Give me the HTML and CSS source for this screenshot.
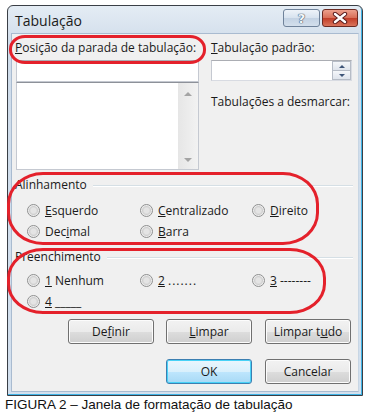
FILE: index.html
```html
<!DOCTYPE html>
<html lang="pt">
<head>
    <meta charset="UTF-8">
    <title>Tabulação</title>
    <link rel="stylesheet" href="styles.css">
</head>
<body>
    <div class="window">
        <div class="titlebar">
            <span class="title">Tabulação</span>
            <div class="caption-btns">
                <span class="cbtn help">?</span>
                <span class="cbtn close">
                    <svg width="16" height="12" viewBox="0 0 16 12">
                        <path d="M3 2 L13 10 M13 2 L3 10" stroke="#5a1d1d" stroke-width="4.4" stroke-linecap="round"/>
                        <path d="M3 2 L13 10 M13 2 L3 10" stroke="#fff" stroke-width="2.4" stroke-linecap="round"/>
                    </svg>
                </span>
            </div>
        </div>

        <div class="client">
            <div class="top">
                <div class="col-left">
                    <div class="lbl"><u>P</u>osição da parada de tabulação:</div>
                    <div class="edit"></div>
                    <div class="listbox">
                        <div class="list-area"></div>
                        <div class="vscroll">
                            <span class="arrow-up"></span>
                            <span class="arrow-down"></span>
                        </div>
                    </div>
                </div>
                <div class="col-right">
                    <div class="lbl"><u>T</u>abulação padrão:</div>
                    <div class="spin">
                        <div class="spin-field"></div>
                        <div class="spin-btns">
                            <span class="sb"><span class="tri-up"></span></span>
                            <span class="sb"><span class="tri-down"></span></span>
                        </div>
                    </div>
                    <div class="lbl desm">Tabulações a desmarcar:</div>
                </div>
            </div>

            <div class="group group-align">
                <div class="group-head"><span>Alinhamento</span><span class="rule"></span></div>
                <div class="radios">
                    <div class="opt"><span class="radio"></span><span><u>E</u>squerdo</span></div>
                    <div class="opt"><span class="radio"></span><span><u>C</u>entralizado</span></div>
                    <div class="opt"><span class="radio"></span><span><u>D</u>ireito</span></div>
                    <div class="opt"><span class="radio"></span><span>Dec<u>i</u>mal</span></div>
                    <div class="opt"><span class="radio"></span><span><u>B</u>arra</span></div>
                </div>
            </div>

            <div class="group group-fill">
                <div class="group-head"><span>Preenchimento</span><span class="rule"></span></div>
                <div class="radios">
                    <div class="opt"><span class="radio"></span><span><u>1</u> Nenhum</span></div>
                    <div class="opt"><span class="radio"></span><span><u>2</u> <span class="leader">.......</span></span></div>
                    <div class="opt"><span class="radio"></span><span><u>3</u> --------</span></div>
                    <div class="opt"><span class="radio"></span><span><u>4</u> _____</span></div>
                </div>
            </div>

            <div class="btn-row first">
                <span class="btn">De<u>f</u>inir</span>
                <span class="btn"><u>L</u>impar</span>
                <span class="btn">Limpar t<u>u</u>do</span>
            </div>
            <div class="btn-row">
                <span class="btn default">OK</span>
                <span class="btn">Cancelar</span>
            </div>
        </div>
    </div>

    <div class="caption">FIGURA 2 – Janela de formatação de tabulação</div>

    <!-- marcações em vermelho sobre a janela -->
    <div class="mark mark-pos"></div>
    <div class="mark mark-align"></div>
    <div class="mark mark-fill"></div>
</body>
</html>
```

FILE: styles.css
```css
body {
    margin: 0;
    padding: 0;
    background-color: #fff;
    font-family: 'Open Sans', 'Noto Sans', sans-serif;
    font-size: 12px;
    color: #1a1a1a;
    position: relative;
    width: 366px;
    height: 415px;
    overflow: hidden;
}

.window {
    margin: 5px 0 0 7px;
    width: 356px;
    box-sizing: border-box;
    border: 1px solid #3a3f46;
    border-radius: 6px 6px 0 0;
    background: linear-gradient(#e4ecf4, #cfdcea 40px, #d3e0ee);
    padding: 0 3px 3px 3px;
    box-shadow: inset -1px -1px 0 #3fb3e6;
}

.titlebar {
    height: 27px;
    display: flex;
    align-items: center;
    justify-content: space-between;
    padding-left: 4px;
}

.title {
    font-size: 14px;
    color: #1b1b1b;
    margin-top: 1px;
}

.caption-btns {
    display: flex;
    gap: 2px;
    margin-top: -3px;
    margin-right: 1px;
}

.cbtn {
    height: 18px;
    box-sizing: border-box;
    border: 1px solid #6f829a;
    border-radius: 3px;
    display: flex;
    align-items: center;
    justify-content: center;
}

.help {
    width: 37px;
    background: linear-gradient(#eef3f9, #d8e3ef 48%, #c3d2e3 52%, #d3dfec);
    color: #f4f7fa;
    font-family: 'DejaVu Sans', sans-serif;
    font-weight: bold;
    font-size: 13px;
    text-shadow: 0 0 1px #44566d, 0 0 1px #44566d, 0 0 1px #44566d;
}

.close {
    width: 36px;
    border-color: #6b2a22;
    background: linear-gradient(#eda08c, #d96f58 48%, #c23e28 52%, #d9745c);
}

.client {
    background-color: #f0f0f0;
    border: 1px solid #a9bbd0;
    border-right-color: #c8d6e4;
    padding: 6px 5px 7px 3px;
}

.top {
    display: flex;
    gap: 12px;
    height: 130px;
}

.col-left {
    width: 184px;
}

.col-right {
    width: 141px;
}

.lbl {
    height: 16px;
    line-height: 16px;
    white-space: nowrap;
}

.edit {
    margin: 4px 0 0 1px;
    height: 22px;
    box-sizing: border-box;
    background: #fff;
    border: 1px solid #c5c9d1;
    border-top-color: #abadb3;
}

.listbox {
    margin-left: 1px;
    height: 88px;
    box-sizing: border-box;
    border: 1px solid #c5c9d1;
    border-top-color: #8d9199;
    background: #fff;
    display: flex;
}

.list-area {
    flex: 1;
}

.vscroll {
    width: 20px;
    background: linear-gradient(90deg, #e6e6e6, #f2f2f2);
    display: flex;
    flex-direction: column;
    justify-content: space-between;
    align-items: center;
    padding: 9px 0 7px;
}

.arrow-up,
.arrow-down {
    width: 0;
    height: 0;
    border-left: 4px solid transparent;
    border-right: 4px solid transparent;
}

.arrow-up {
    border-bottom: 4px solid #a4a4a4;
}

.arrow-down {
    border-top: 4px solid #a4a4a4;
}

.spin {
    margin-top: 4px;
    height: 21px;
    box-sizing: border-box;
    border: 1px solid #abadb3;
    border-color: #abadb3 #d8dbe2 #d8dbe2 #c5c9d1;
    background: #fff;
    display: flex;
}

.spin-field {
    flex: 1;
}

.spin-btns {
    width: 19px;
    display: flex;
    flex-direction: column;
}

.sb {
    flex: 1;
    border: 1px solid #b6bcc6;
    background: linear-gradient(#f5f7fa, #dfe4ec);
    display: flex;
    align-items: center;
    justify-content: center;
}

.sb + .sb {
    border-top: none;
}

.tri-up,
.tri-down {
    width: 0;
    height: 0;
    border-left: 3px solid transparent;
    border-right: 3px solid transparent;
}

.tri-up {
    border-bottom: 3px solid #3e5578;
}

.tri-down {
    border-top: 3px solid #3e5578;
}

.desm {
    margin-top: 13px;
}

.group-head {
    height: 16px;
    line-height: 16px;
    display: flex;
    align-items: center;
    gap: 6px;
}

.rule {
    flex: 1;
    height: 1px;
    background: #d5dfe5;
    box-shadow: 0 1px 0 #fff;
    margin-top: 1px;
}

.group-align {
    margin-top: 7px;
}

.group-fill {
    margin-top: 10px;
}

.radios {
    display: grid;
    grid-template-columns: 113px 112px 1fr;
    row-gap: 5px;
    padding-left: 12px;
}

.group-align .radios {
    margin-top: 9px;
}

.group-fill .radios {
    margin-top: 7px;
}

.opt {
    height: 16px;
    display: flex;
    align-items: center;
    gap: 5px;
    white-space: nowrap;
}

.leader {
    letter-spacing: 1px;
}

.radio {
    width: 13px;
    height: 13px;
    box-sizing: border-box;
    border-radius: 50%;
    border: 1px solid #8e8f8f;
    background: radial-gradient(circle, #e4e4e4 0 2.5px, #cfcfcf 4px, #ebebeb 5px, #fafafa 6px);
}

.btn-row {
    display: flex;
    justify-content: flex-end;
    gap: 13px;
    padding-right: 2px;
    margin-top: 15px;
}

.btn-row.first {
    margin-top: 10px;
}

.btn-row.first .btn:first-child {
    margin-right: -1px;
}

.btn {
    width: 86px;
    height: 25px;
    box-sizing: border-box;
    border: 1px solid #707070;
    border-radius: 3px;
    background: linear-gradient(#f2f2f2, #ebebeb 50%, #dddddd 51%, #cfcfcf);
    box-shadow: inset 0 0 0 1px #fcfcfc;
    display: flex;
    align-items: center;
    justify-content: center;
}

.btn.default {
    border-color: #3c7fb1;
    box-shadow: inset 0 0 0 1px #48d2f7;
    background: linear-gradient(#eaf6fd, #d9f0fc 50%, #bee6fd 51%, #a7d9f5);
}

.caption {
    font-family: 'Liberation Sans', Arial, sans-serif;
    font-size: 13.5px;
    line-height: 16px;
    color: #111;
    margin: 1px 0 0 5px;
}

.mark {
    position: absolute;
    box-sizing: border-box;
    border: 3px solid #e4212b;
}

.mark-pos {
    left: 9px;
    top: 35px;
    width: 197px;
    height: 29px;
    border-radius: 16px / 14px;
}

.mark-align {
    left: 7px;
    top: 172px;
    width: 312px;
    height: 73px;
    border-radius: 36px / 32px;
}

.mark-fill {
    left: 7px;
    top: 248px;
    width: 319px;
    height: 66px;
    border-radius: 36px / 30px;
}
```
